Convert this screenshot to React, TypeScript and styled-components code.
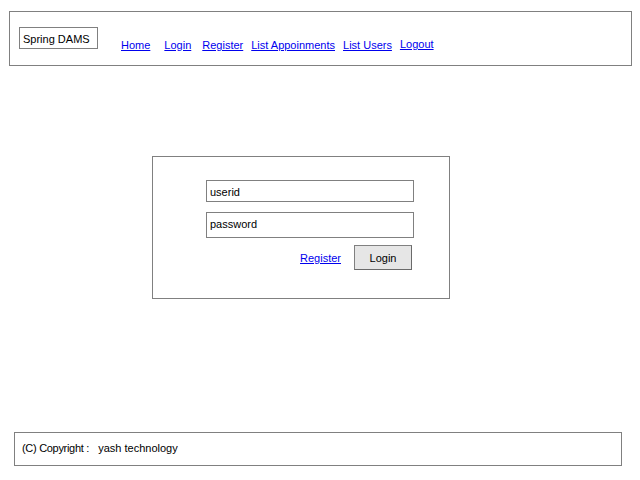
import React from "react";
import styled, { createGlobalStyle } from "styled-components";

const Global = createGlobalStyle`
  html, body { margin: 0; padding: 0; background: #fff; }
  body { font-family: "Liberation Sans", Arial, sans-serif; font-size: 11px; color: #000; }
  * { box-sizing: border-box; }
`;

const Page = styled.div`
  display: flex;
  flex-direction: column;
  align-items: flex-start;
  padding-top: 11px;
`;

const Header = styled.header`
  margin-left: 9px;
  width: 623px;
  height: 55px;
  border: 1px solid #808080;
  display: flex;
  align-items: flex-start;
  padding-left: 9px;
`;

const Brand = styled.div`
  margin-top: 15px;
  width: 79px;
  height: 22px;
  border: 1px solid #808080;
  padding: 1px 0 0 3px;
  line-height: 20px;
  font-size: 11px;
`;

const Nav = styled.nav`
  display: flex;
  align-items: flex-start;
`;

const NavLink = styled.a<{ $ml: number; $mt: number }>`
  margin-left: ${(p) => p.$ml}px;
  margin-top: ${(p) => p.$mt}px;
  line-height: 13px;
  font-size: 11px;
  color: #0000ee;
  text-decoration: underline;
  white-space: nowrap;
`;

const LoginBox = styled.section`
  margin-top: 90px;
  margin-left: 152px;
  width: 298px;
  height: 143px;
  border: 1px solid #808080;
  padding: 23px 0 0 53px;
  display: flex;
  flex-direction: column;
  align-items: flex-start;
`;

const Field = styled.input<{ $h: number; $shift: number }>`
  width: 208px;
  height: ${(p) => p.$h}px;
  border: 1px solid #808080;
  padding: ${(p) => (p.$shift > 0 ? `${p.$shift * 2}px 0 0 3px` : `0 0 ${-p.$shift * 2}px 3px`)};
  margin: 0 0 10px 0;
  font-family: "Liberation Sans", Arial, sans-serif;
  font-size: 11px;
  color: #000;
  background: #fff;
  outline: none;
`;

const Actions = styled.div`
  width: 208px;
  margin-top: -3px;
  display: flex;
  justify-content: flex-end;
  align-items: center;
  padding-right: 2px;
  gap: 13px;
`;

const TextLink = styled.a`
  color: #0000ee;
  text-decoration: underline;
  font-size: 11px;
  line-height: 13px;
  margin-top: 2px;
`;

const Button = styled.button`
  width: 58px;
  height: 25px;
  background: #e6e6e6;
  border: 1px solid #808080;
  border-bottom-color: #6a6a6a;
  border-right-color: #6a6a6a;
  font-family: "Liberation Sans", Arial, sans-serif;
  font-size: 11px;
  color: #000;
  padding: 0;
`;

const Footer = styled.footer`
  margin-top: 133px;
  margin-left: 14px;
  width: 608px;
  height: 34px;
  border: 1px solid #808080;
  padding: 9px 0 0 7px;
  line-height: 13px;
  font-size: 11px;
  white-space: pre;
`;

const Tight = styled.span`
  letter-spacing: -0.3px;
`;

export default function App() {
  return (
    <>
      <Global />
      <Page>
        <Header>
          <Brand>Spring DAMS</Brand>
          <Nav>
            <NavLink href="#" $ml={23} $mt={27}>Home</NavLink>
            <NavLink href="#" $ml={14} $mt={27}>Login</NavLink>
            <NavLink href="#" $ml={11} $mt={27}>Register</NavLink>
            <NavLink href="#" $ml={8} $mt={27}>List Appoinments</NavLink>
            <NavLink href="#" $ml={8} $mt={27}>List Users</NavLink>
            <NavLink href="#" $ml={8} $mt={26}>Logout</NavLink>
          </Nav>
        </Header>
        <LoginBox>
          <Field $h={22} $shift={1} defaultValue="userid" readOnly />
          <Field $h={26} $shift={-1} defaultValue="password" readOnly />
          <Actions>
            <TextLink href="#">Register</TextLink>
            <Button>Login</Button>
          </Actions>
        </LoginBox>
        <Footer>
          <Tight>(C) Copyright :</Tight>{"   "}yash technology
        </Footer>
      </Page>
    </>
  );
}
